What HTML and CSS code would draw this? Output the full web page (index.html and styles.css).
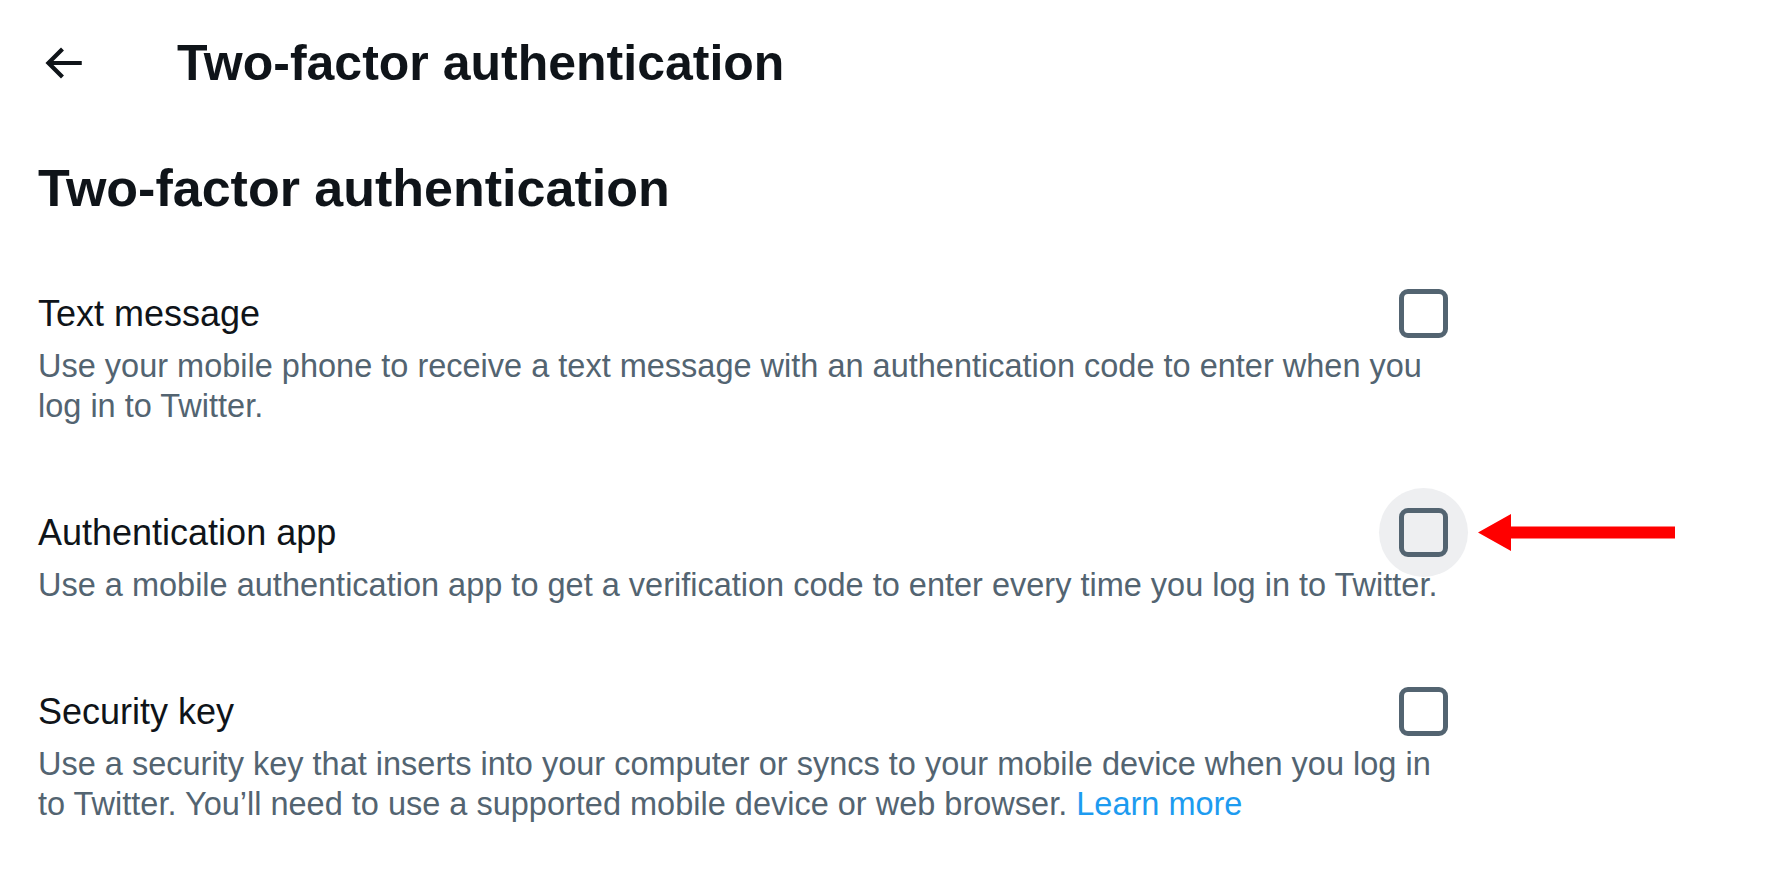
FILE: index.html
```html
<!DOCTYPE html>
<html lang="en">
<head>
  <meta charset="UTF-8">
  <meta name="viewport" content="width=device-width, initial-scale=1.0">
  <title>Two-factor authentication</title>
  <link rel="stylesheet" href="styles.css">
</head>
<body>
  <header class="top-bar">
    <a href="javascript:history.back()" class="back-button" aria-label="Back">
      <svg viewBox="0 0 24 24" width="50" height="50">
        <path d="M7.414 13l5.043 5.04-1.414 1.42L3.586 12l7.457-7.46 1.414 1.42L7.414 11H21v2H7.414z"></path>
      </svg>
    </a>
    <h1>Two-factor authentication</h1>
  </header>

  <main class="settings">
    <h2>Two-factor authentication</h2>

    <div class="option">
      <div class="option-head">
        <span class="option-title">Text message</span>
        <span class="check"><span class="box"></span></span>
      </div>
      <p class="option-desc">Use your mobile phone to receive a text message with an authentication code to enter when you log in to Twitter.</p>
    </div>

    <div class="option">
      <div class="option-head">
        <span class="option-title">Authentication app</span>
        <span class="check is-hover">
          <span class="box"></span>
          <!-- flèche rouge d'annotation -->
          <svg class="pointer" viewBox="0 0 197 37" width="197" height="37">
            <polygon points="0,18.5 33,0 33,12.5 197,12.5 197,24.5 33,24.5 33,37"></polygon>
          </svg>
        </span>
      </div>
      <p class="option-desc">Use a mobile authentication app to get a verification code to enter every time you log in to Twitter.</p>
    </div>

    <div class="option">
      <div class="option-head">
        <span class="option-title">Security key</span>
        <span class="check"><span class="box"></span></span>
      </div>
      <p class="option-desc">Use a security key that inserts into your computer or syncs to your mobile device when you log in to Twitter. You’ll need to use a supported mobile device or web browser. <a href="#">Learn more</a></p>
    </div>
  </main>
</body>
</html>
```

FILE: styles.css
```css
/* Général */
* {
  margin: 0;
  padding: 0;
  box-sizing: border-box;
}

body {
  font-family: 'Liberation Sans', Arial, sans-serif;
  background-color: #fff;
  color: #0f1419;
}

/* Barre du haut */
.top-bar {
  display: flex;
  align-items: center;
  padding: 33px 0 0 38px;
}

.back-button {
  display: flex;
  fill: #0f1419;
}

.top-bar h1 {
  font-size: 50px;
  line-height: 60px;
  font-weight: bold;
  margin-left: 89px;
}

/* Contenu */
.settings {
  width: 1448px;
  padding-left: 38px;
}

.settings h2 {
  font-size: 52px;
  line-height: 60px;
  font-weight: bold;
  margin-top: 65px;
  margin-bottom: 71px;
}

.option + .option {
  margin-top: 82px;
}

.option-head {
  display: flex;
  justify-content: space-between;
  align-items: center;
  height: 49px;
}

.option-title {
  font-size: 36px;
  line-height: 48px;
}

.option-desc {
  margin-top: 8px;
  font-size: 32.5px;
  line-height: 40px;
  color: #536471;
}

.option-desc a {
  color: #1d9bf0;
  text-decoration: none;
}

/* Case à cocher */
.check {
  position: relative;
  display: flex;
  width: 49px;
  height: 49px;
}

.box {
  position: relative;
  width: 49px;
  height: 49px;
  border: 5px solid #536471;
  border-radius: 9px;
}

.check.is-hover::before {
  content: "";
  position: absolute;
  left: -20px;
  top: -20px;
  width: 89px;
  height: 89px;
  border-radius: 50%;
  background-color: #eeeff1;
}

.pointer {
  position: absolute;
  left: 79px;
  top: 6px;
  fill: #ff0000;
}
```
